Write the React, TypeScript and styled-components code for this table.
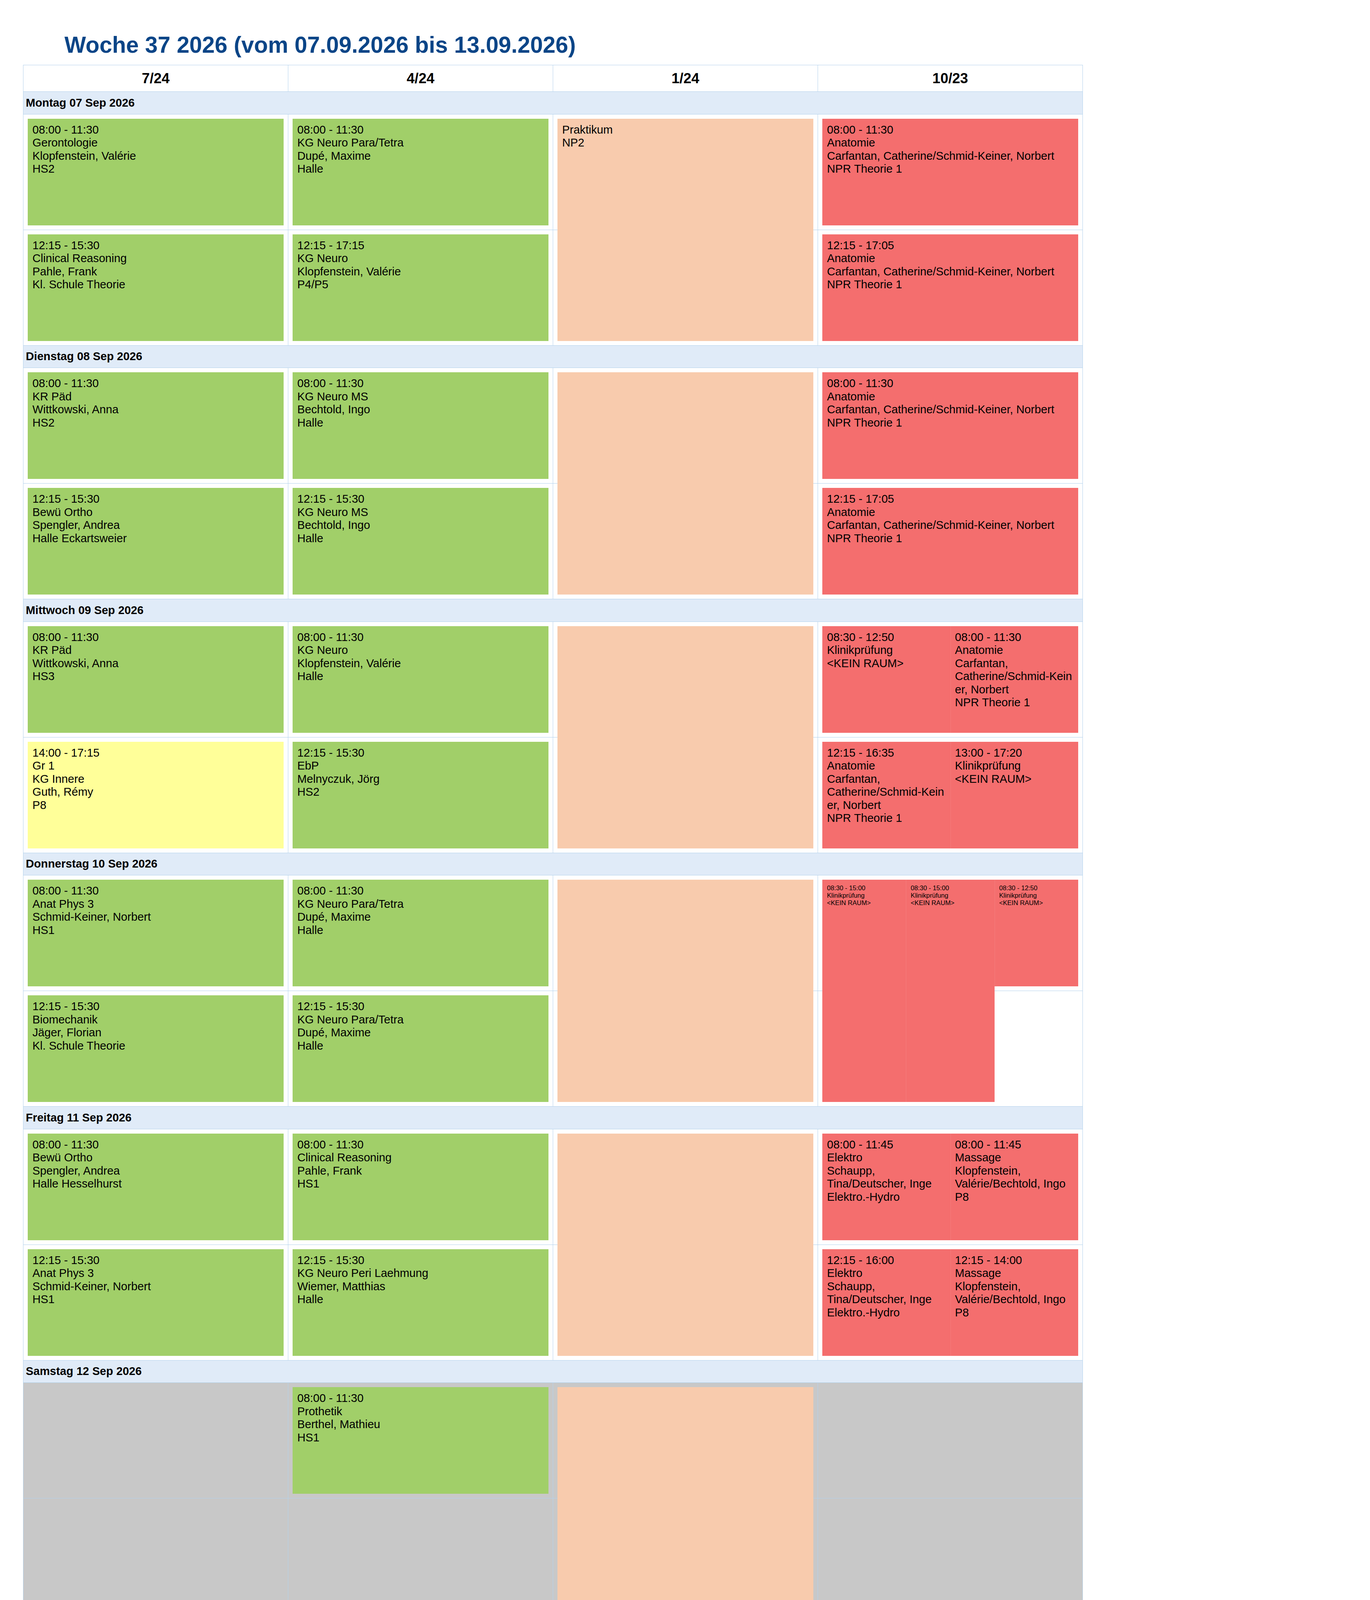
import React from "react";
import styled, { createGlobalStyle, css } from "styled-components";

type Tone = "green" | "red" | "peach" | "yellow";

const tones: Record<Tone, string> = {
  green: "#a1cf69",
  red: "#f46e6e",
  peach: "#f8cbad",
  yellow: "#ffff99",
};

const line = "#b4d2ec";

interface Entry {
  tone: Tone;
  from: number;
  to: number;
  lane: number;
  lines: string[];
}

interface Slot {
  col: number;
  lanes?: string;
  small?: boolean;
  entries: Entry[];
}

interface DayPlan {
  label: string;
  weekend?: boolean;
  slots: Slot[];
}

const at = (tone: Tone, row: number, lines: string[], lane = 1): Entry => ({
  tone,
  from: row,
  to: row + 1,
  lane,
  lines,
});

const span = (tone: Tone, lines: string[], lane = 1): Entry => ({
  tone,
  from: 1,
  to: 3,
  lane,
  lines,
});

const anatomie = (time: string) => [
  time,
  "Anatomie",
  "Carfantan, Catherine/Schmid-Keiner, Norbert",
  "NPR Theorie 1",
];

const anatomieNarrow = (time: string) => [
  time,
  "Anatomie",
  "Carfantan,",
  "Catherine/Schmid-Kein",
  "er, Norbert",
  "NPR Theorie 1",
];

const klinik = (time: string) => [time, "Klinikprüfung", "<KEIN RAUM>"];

const praktikum: Slot = { col: 3, entries: [span("peach", [])] };

const week: DayPlan[] = [
  {
    label: "Montag 07 Sep 2026",
    slots: [
      {
        col: 1,
        entries: [
          at("green", 1, ["08:00 - 11:30", "Gerontologie", "Klopfenstein, Valérie", "HS2"]),
          at("green", 2, ["12:15 - 15:30", "Clinical Reasoning", "Pahle, Frank", "Kl. Schule Theorie"]),
        ],
      },
      {
        col: 2,
        entries: [
          at("green", 1, ["08:00 - 11:30", "KG Neuro Para/Tetra", "Dupé, Maxime", "Halle"]),
          at("green", 2, ["12:15 - 17:15", "KG Neuro", "Klopfenstein, Valérie", "P4/P5"]),
        ],
      },
      { col: 3, entries: [span("peach", ["Praktikum", "NP2"])] },
      {
        col: 4,
        entries: [at("red", 1, anatomie("08:00 - 11:30")), at("red", 2, anatomie("12:15 - 17:05"))],
      },
    ],
  },
  {
    label: "Dienstag 08 Sep 2026",
    slots: [
      {
        col: 1,
        entries: [
          at("green", 1, ["08:00 - 11:30", "KR Päd", "Wittkowski, Anna", "HS2"]),
          at("green", 2, ["12:15 - 15:30", "Bewü Ortho", "Spengler, Andrea", "Halle Eckartsweier"]),
        ],
      },
      {
        col: 2,
        entries: [
          at("green", 1, ["08:00 - 11:30", "KG Neuro MS", "Bechtold, Ingo", "Halle"]),
          at("green", 2, ["12:15 - 15:30", "KG Neuro MS", "Bechtold, Ingo", "Halle"]),
        ],
      },
      praktikum,
      {
        col: 4,
        entries: [at("red", 1, anatomie("08:00 - 11:30")), at("red", 2, anatomie("12:15 - 17:05"))],
      },
    ],
  },
  {
    label: "Mittwoch 09 Sep 2026",
    slots: [
      {
        col: 1,
        entries: [
          at("green", 1, ["08:00 - 11:30", "KR Päd", "Wittkowski, Anna", "HS3"]),
          at("yellow", 2, ["14:00 - 17:15", "Gr 1", "KG Innere", "Guth, Rémy", "P8"]),
        ],
      },
      {
        col: 2,
        entries: [
          at("green", 1, ["08:00 - 11:30", "KG Neuro", "Klopfenstein, Valérie", "Halle"]),
          at("green", 2, ["12:15 - 15:30", "EbP", "Melnyczuk, Jörg", "HS2"]),
        ],
      },
      praktikum,
      {
        col: 4,
        lanes: "1fr 1fr",
        entries: [
          at("red", 1, klinik("08:30 - 12:50"), 1),
          at("red", 1, anatomieNarrow("08:00 - 11:30"), 2),
          at("red", 2, anatomieNarrow("12:15 - 16:35"), 1),
          at("red", 2, klinik("13:00 - 17:20"), 2),
        ],
      },
    ],
  },
  {
    label: "Donnerstag 10 Sep 2026",
    slots: [
      {
        col: 1,
        entries: [
          at("green", 1, ["08:00 - 11:30", "Anat Phys 3", "Schmid-Keiner, Norbert", "HS1"]),
          at("green", 2, ["12:15 - 15:30", "Biomechanik", "Jäger, Florian", "Kl. Schule Theorie"]),
        ],
      },
      {
        col: 2,
        entries: [
          at("green", 1, ["08:00 - 11:30", "KG Neuro Para/Tetra", "Dupé, Maxime", "Halle"]),
          at("green", 2, ["12:15 - 15:30", "KG Neuro Para/Tetra", "Dupé, Maxime", "Halle"]),
        ],
      },
      praktikum,
      {
        col: 4,
        lanes: "214fr 226fr 214fr",
        small: true,
        entries: [
          span("red", klinik("08:30 - 15:00"), 1),
          span("red", klinik("08:30 - 15:00"), 2),
          at("red", 1, klinik("08:30 - 12:50"), 3),
        ],
      },
    ],
  },
  {
    label: "Freitag 11 Sep 2026",
    slots: [
      {
        col: 1,
        entries: [
          at("green", 1, ["08:00 - 11:30", "Bewü Ortho", "Spengler, Andrea", "Halle Hesselhurst"]),
          at("green", 2, ["12:15 - 15:30", "Anat Phys 3", "Schmid-Keiner, Norbert", "HS1"]),
        ],
      },
      {
        col: 2,
        entries: [
          at("green", 1, ["08:00 - 11:30", "Clinical Reasoning", "Pahle, Frank", "HS1"]),
          at("green", 2, ["12:15 - 15:30", "KG Neuro Peri Laehmung", "Wiemer, Matthias", "Halle"]),
        ],
      },
      praktikum,
      {
        col: 4,
        lanes: "1fr 1fr",
        entries: [
          at("red", 1, ["08:00 - 11:45", "Elektro", "Schaupp,", "Tina/Deutscher, Inge", "Elektro.-Hydro"], 1),
          at("red", 1, ["08:00 - 11:45", "Massage", "Klopfenstein,", "Valérie/Bechtold, Ingo", "P8"], 2),
          at("red", 2, ["12:15 - 16:00", "Elektro", "Schaupp,", "Tina/Deutscher, Inge", "Elektro.-Hydro"], 1),
          at("red", 2, ["12:15 - 14:00", "Massage", "Klopfenstein,", "Valérie/Bechtold, Ingo", "P8"], 2),
        ],
      },
    ],
  },
  {
    label: "Samstag 12 Sep 2026",
    weekend: true,
    slots: [
      { col: 2, entries: [at("green", 1, ["08:00 - 11:30", "Prothetik", "Berthel, Mathieu", "HS1"])] },
      praktikum,
    ],
  },
  {
    label: "Sonntag 13 Sep 2026",
    weekend: true,
    slots: [praktikum],
  },
];

const classes = ["7/24", "4/24", "1/24", "10/23"];

const GlobalStyle = createGlobalStyle`
  html, body {
    margin: 0;
    overflow: hidden;
    background: #ffffff;
  }
  body {
    font-family: "Liberation Sans", Arial, sans-serif;
    color: #000000;
  }
  * {
    box-sizing: border-box;
  }
`;

const Page = styled.main`
  width: 3507px;
  height: 4960px;
  overflow: hidden;
  padding-left: 59px;
`;

const Title = styled.h1`
  margin: 0;
  padding: 82px 0 0 106px;
  font-size: 58.33px;
  line-height: 66px;
  font-weight: 700;
  color: #0b4587;
`;

const Table = styled.div`
  width: fit-content;
  margin-top: 18px;
  border-top: 1px solid ${line};
  border-left: 1px solid ${line};
`;

const HeaderRow = styled.div`
  display: grid;
  grid-template-columns: repeat(4, 678px);
  height: 68px;
`;

const HeaderCell = styled.div`
  display: flex;
  align-items: center;
  justify-content: center;
  border-right: 1px solid ${line};
  border-bottom: 1px solid ${line};
  font-size: 36.5px;
  font-weight: 700;
`;

const Day = styled.section`
  display: grid;
  grid-template-columns: repeat(4, 678px);
  grid-template-rows: 57.5px 296px 296px;
`;

const DayLabel = styled.div`
  grid-column: 1 / -1;
  grid-row: 1;
  display: flex;
  align-items: center;
  padding-left: 6px;
  background: #e0ebf8;
  border-right: 1px solid ${line};
  border-bottom: 1px solid ${line};
  font-size: 29.17px;
  font-weight: 700;
`;

const Cell = styled.div<{ $row: number; $col: number; $weekend?: boolean }>`
  grid-row: ${(p) => p.$row + 1};
  grid-column: ${(p) => p.$col};
  background: ${(p) => (p.$weekend ? "#c8c8c8" : "#ffffff")};
  border-right: 1px solid ${line};
  border-bottom: 1px solid ${line};
`;

const Lanes = styled.div<{ $col: number; $lanes: string }>`
  grid-column: ${(p) => p.$col};
  grid-row: 2 / 4;
  display: grid;
  grid-template-columns: ${(p) => p.$lanes};
  grid-template-rows: 296px 296px;
  padding: 0 12px 0 11px;
`;

const Block = styled.div<{
  $tone: Tone;
  $lane: number;
  $from: number;
  $to: number;
  $small?: boolean;
}>`
  grid-column: ${(p) => p.$lane};
  grid-row: ${(p) => p.$from} / ${(p) => p.$to};
  min-width: 0;
  margin: 11px 0 12px;
  padding: 12px;
  background: ${(p) => tones[p.$tone]};
  font-size: ${(p) => (p.$small ? "16.67px" : "29.17px")};
  line-height: 1.15;
  overflow: hidden;
  ${(p) =>
    p.$lane > 1 &&
    css`
      box-shadow: inset 1px 0 0 rgba(255, 255, 255, 0.1);
    `}
`;

const TextLine = styled.div`
  white-space: nowrap;
`;

const Legend = styled.p`
  margin: 58px 0 0 13px;
  font-size: 33.33px;
  line-height: 1.15;
  white-space: nowrap;
`;

const App: React.FC = () => {
  return (
    <Page>
      <GlobalStyle />
      <Title>Woche 37 2026 (vom 07.09.2026 bis 13.09.2026)</Title>
      <Table>
        <HeaderRow>
          {classes.map((name) => (
            <HeaderCell key={name}>{name}</HeaderCell>
          ))}
        </HeaderRow>
        {week.map((day) => (
          <Day key={day.label}>
            <DayLabel>{day.label}</DayLabel>
            {[1, 2].map((row) =>
              [1, 2, 3, 4].map((col) => (
                <Cell key={`${row}-${col}`} $row={row} $col={col} $weekend={day.weekend} />
              ))
            )}
            {day.slots.map((slot) => (
              <Lanes key={slot.col} $col={slot.col} $lanes={slot.lanes ?? "minmax(0, 1fr)"}>
                {slot.entries.map((entry, i) => (
                  <Block
                    key={i}
                    $tone={entry.tone}
                    $lane={entry.lane}
                    $from={entry.from}
                    $to={entry.to}
                    $small={slot.small}
                  >
                    {entry.lines.map((text, j) => (
                      <TextLine key={j}>{text}</TextLine>
                    ))}
                  </Block>
                ))}
              </Lanes>
            ))}
          </Day>
        ))}
      </Table>
      <Legend>
        Typ: UN: Unterricht, FP: Fachprüfung, PP: Probeprüfung, WP: Wiederholungsprüfung, KL: Klausur,
        "KLB: Klausurbesprechung, SE: Staatsexamen, FO: Fortbildung, XT: Externer Termin BE: Betreuung
        (VM = Vormittag, NM = Nachmittag)
      </Legend>
    </Page>
  );
};

export default App;
